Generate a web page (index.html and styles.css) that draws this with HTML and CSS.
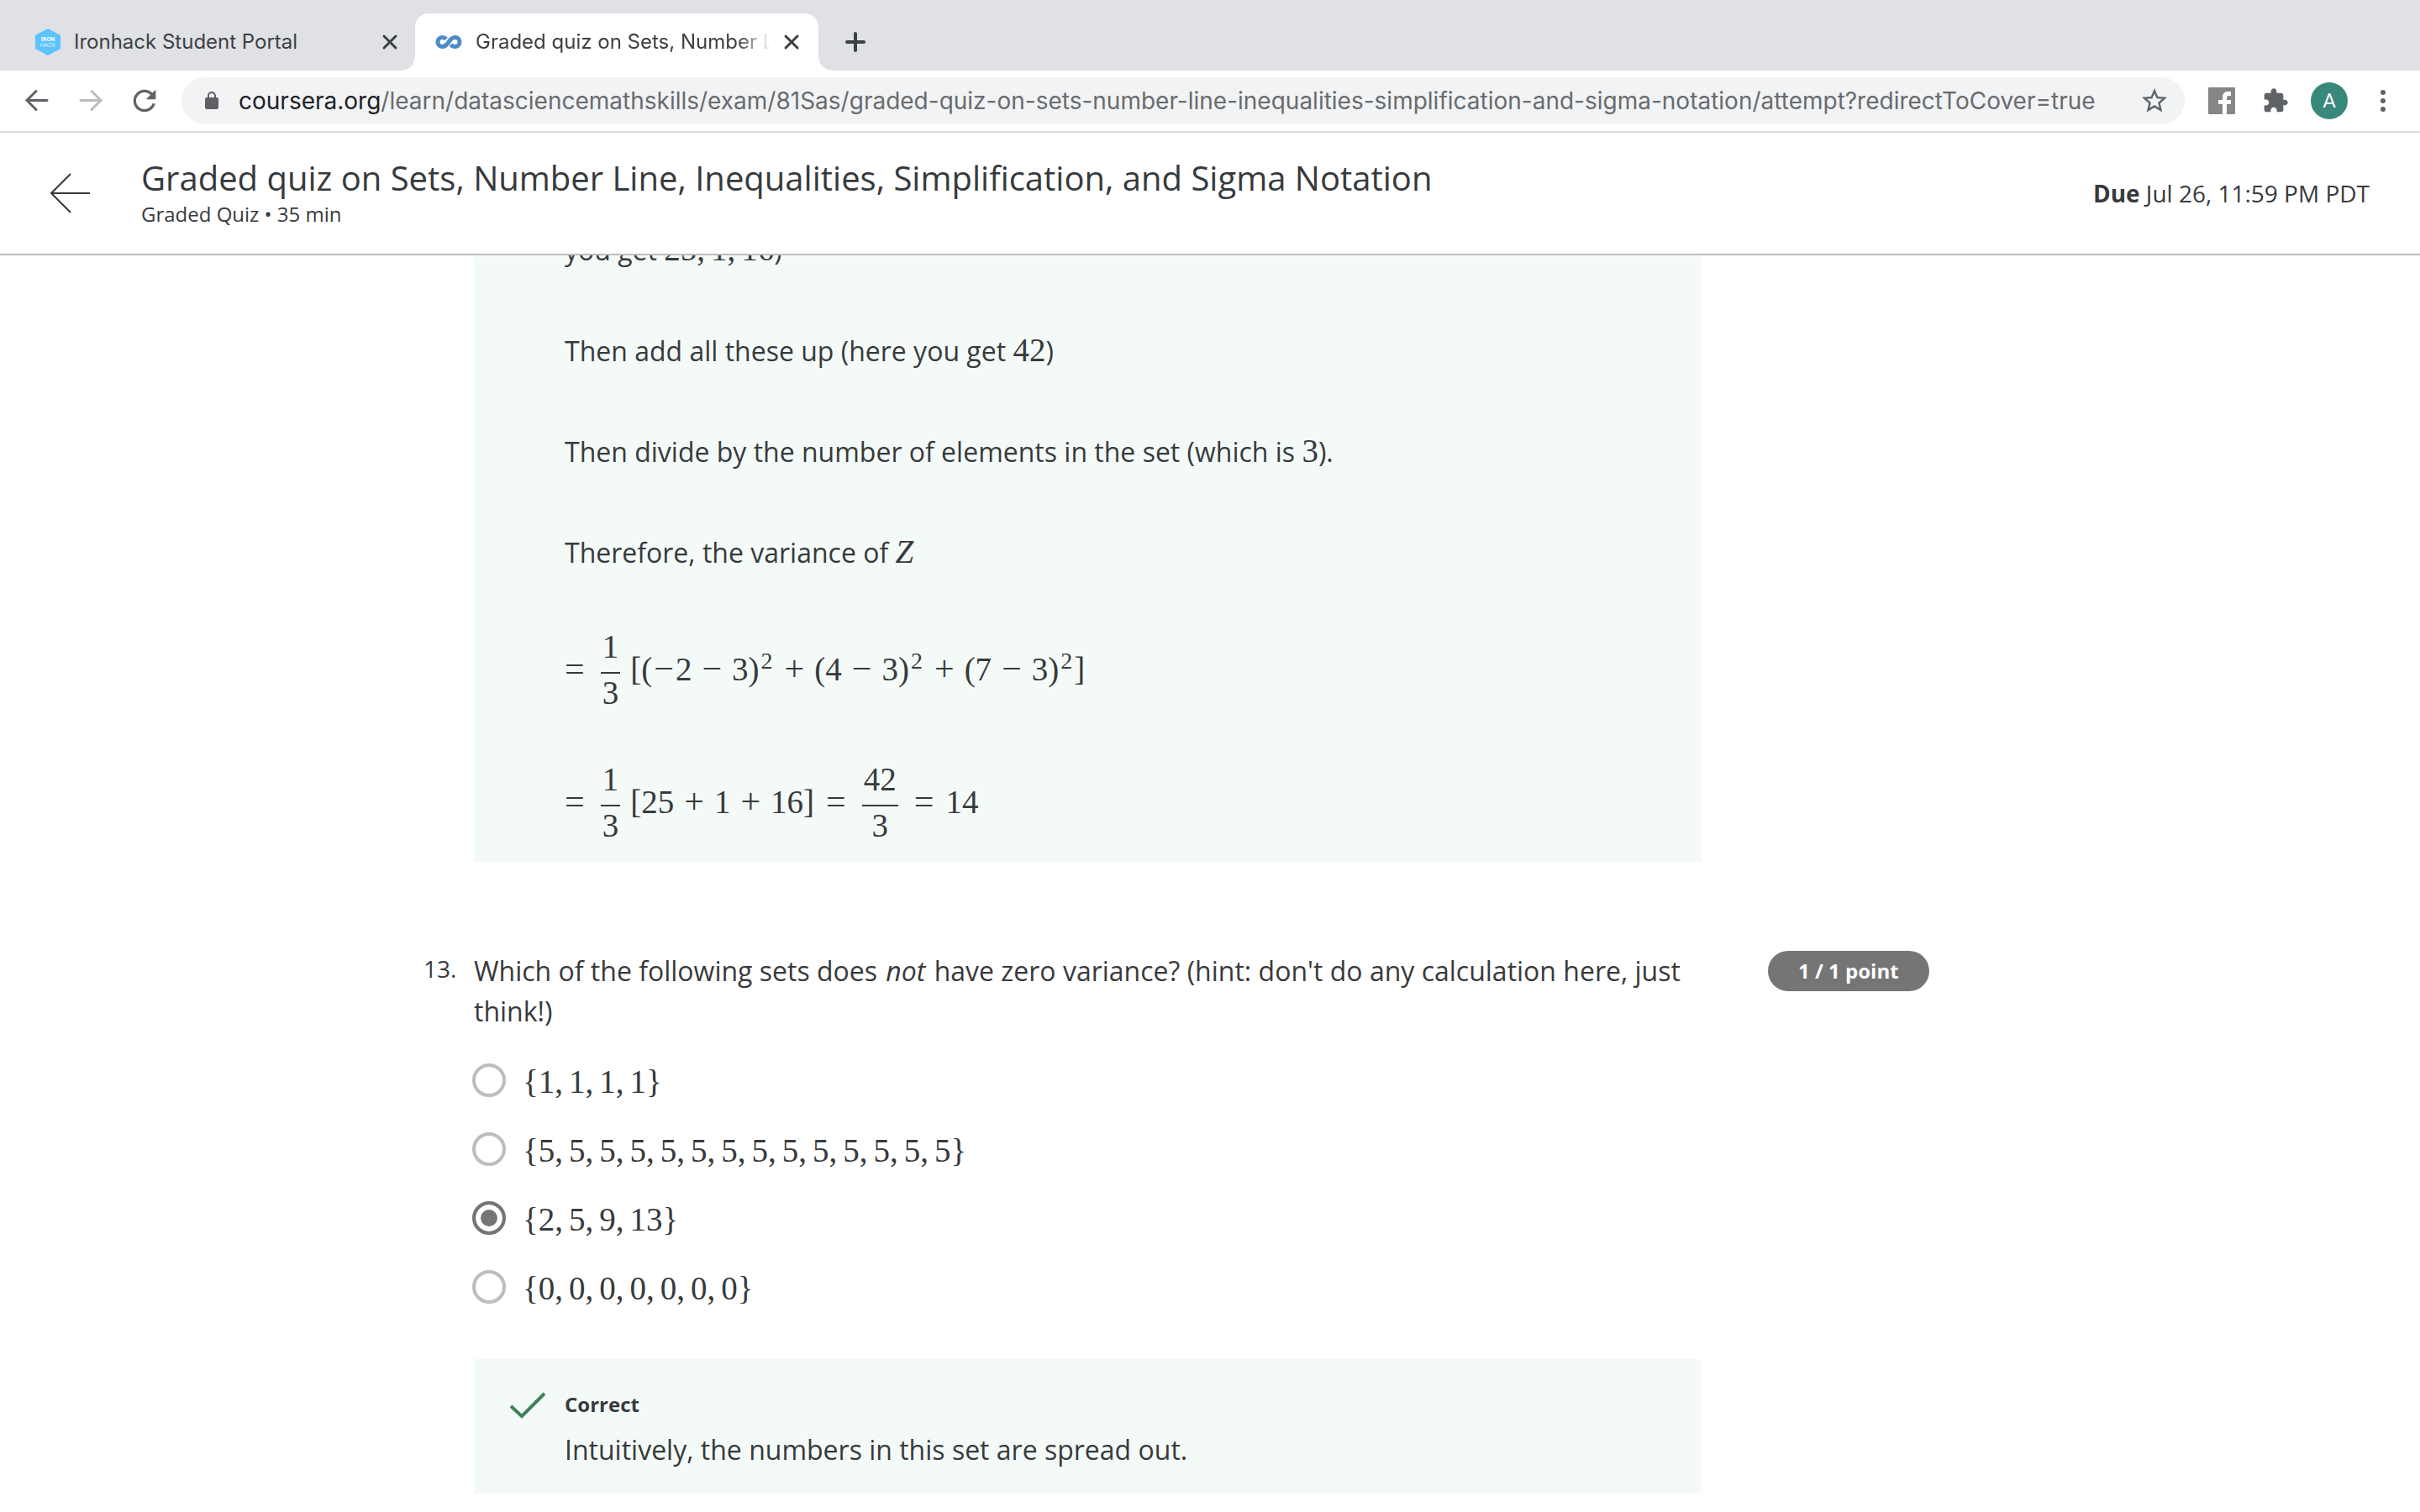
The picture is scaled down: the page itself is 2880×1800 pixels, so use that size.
FILE: index.html
```html
<!DOCTYPE html>
<html lang="en">
<head>
<meta charset="utf-8">
<meta name="viewport" content="width=device-width, initial-scale=1">
<title>Graded quiz on Sets, Number Line, Inequalities, Simplification, and Sigma Notation</title>
<link rel="stylesheet" href="styles.css">
</head>
<body>
<div class="tabs">
  <div class="tab">
    <svg class="hex" viewBox="0 0 30 32" width="30" height="32"><path fill="#5cc3fb" d="M15 0l15 8v16l-15 8L0 24V8z"/><text class="hex-bold" x="15" y="15">IRON</text><text class="hex-thin" x="15" y="22">HACK</text></svg>
    <span class="tab-title">Ironhack Student Portal</span>
    <button class="close" aria-label="Close tab"><svg viewBox="0 0 16 16" width="16" height="16"><path class="line" d="M1 1l14 14M15 1L1 15"/></svg></button>
  </div>
  <div class="tab active">
    <svg class="infinity" viewBox="0 0 32 16" width="32" height="16"><path fill="none" stroke="#4f8bc9" stroke-width="5" d="M13 4.6C11.800 3.200 10.200 2.500 8.500 2.500a5.500 5.500 0 0 0 0 11c3.500 0 5.500-2.500 7.500-5.500s4-5.500 7.500-5.500a5.500 5.500 0 0 1 0 11c-2 0-3.700-.8-5-2.400"/></svg>
    <span class="tab-title">Graded quiz on Sets, Number Line</span>
    <button class="close" aria-label="Close tab"><svg viewBox="0 0 16 16" width="16" height="16"><path class="line" d="M1 1l14 14M15 1L1 15"/></svg></button>
  </div>
  <button class="new-tab" aria-label="New tab"><svg viewBox="0 0 24 24" width="24" height="24"><path class="line thick" d="M12 2v20M2 12h20"/></svg></button>
</div>

<div class="toolbar">
  <nav class="nav">
    <button aria-label="Back"><svg viewBox="0 0 32 32" width="32" height="32"><path class="arrow" d="M28 15.500H5M15 4.500l-11 11 11 11"/></svg></button>
    <button aria-label="Forward"><svg viewBox="0 0 32 32" width="32" height="32"><path class="arrow dim" d="M4 15.500h23M17 4.500l11 11-11 11"/></svg></button>
    <button aria-label="Reload"><svg class="reload" viewBox="0 0 24 24" width="40" height="40"><path fill="#5f6368" d="M17.650 6.350C16.200 4.900 14.210 4 12 4c-4.420 0-7.990 3.580-7.990 8s3.570 8 7.990 8c3.730 0 6.840-2.550 7.730-6h-2.080c-.82 2.330-3.040 4-5.650 4-3.310 0-6-2.690-6-6s2.690-6 6-6c1.660 0 3.140.69 4.220 1.780L13 11h7V4l-2.350 2.350z"/></svg></button>
  </nav>
  <div class="omnibox">
    <svg viewBox="0 0 16 22" width="16" height="22"><path fill="#5f6064" d="M2 7h12a2 2 0 0 1 2 2v10a2 2 0 0 1-2 2H2a2 2 0 0 1-2-2V9a2 2 0 0 1 2-2z"/><path fill="none" stroke="#5f6064" stroke-width="2" d="M4 8V5a4 4 0 0 1 8 0v3"/></svg>
    <div class="url" role="textbox" aria-label="Address"><span class="host">coursera.org</span>/learn/datasciencemathskills/exam/81Sas/graded-quiz-on-sets-number-line-inequalities-simplification-and-sigma-notation/attempt?redirectToCover=true</div>
    <button aria-label="Bookmark this page"><svg viewBox="0 0 24 24" width="36" height="36"><path fill="#5f6368" d="M22 9.240l-7.190-.62L12 2 9.190 8.630 2 9.240l5.460 4.730L5.820 21 12 17.270 18.180 21l-1.630-7.030L22 9.240zM12 15.400l-3.760 2.270 1-4.280-3.320-2.880 4.380-.38L12 6.100l1.710 4.040 4.380.38-3.320 2.880 1 4.280L12 15.400z"/></svg></button>
  </div>
  <button class="ext" aria-label="Facebook extension"><svg viewBox="0 0 32 32" width="32" height="32"><rect width="32" height="32" rx="1" fill="#868686"/><path fill="#fff" d="M17 32V20h-5v-5h5v-3c0-4.500 2.500-7 6-7h4v5h-2.500c-1.700 0-2.500.9-2.500 2.500V15h5v5h-5v12z"/></svg></button>
  <button class="ext" aria-label="Extensions"><svg viewBox="0 0 24 24" width="32" height="32"><path fill="#5f6368" d="M20.500 11H19V7c0-1.100-.9-2-2-2h-4V3.500C13 2.120 11.880 1 10.500 1S8 2.120 8 3.500V5H4c-1.100 0-1.990.9-1.990 2v3.800H3.500c1.490 0 2.700 1.210 2.700 2.700s-1.210 2.700-2.700 2.700H2V20c0 1.100.9 2 2 2h3.800v-1.500c0-1.490 1.210-2.700 2.700-2.700 1.490 0 2.700 1.210 2.700 2.700V22H17c1.100 0 2-.9 2-2v-4h1.500c1.380 0 2.500-1.120 2.500-2.500S21.880 11 20.500 11z"/></svg></button>
  <button class="avatar" aria-label="Profile">A</button>
  <button class="menu" aria-label="Menu"><svg viewBox="0 0 8 28" width="8" height="28"><g fill="#5f6368"><circle cx="4" cy="4" r="3"/><circle cx="4" cy="14" r="3"/><circle cx="4" cy="24" r="3"/></g></svg></button>
</div>

<header class="header">
  <a class="back" href="#" aria-label="Back to course"><svg viewBox="0 0 48 48" width="48" height="48"><path fill="none" stroke="#373a3c" stroke-width="2" d="M47 24H2M24 1L1 24l23 23"/></svg></a>
  <div class="heading">
    <h1>Graded quiz on Sets, Number Line, Inequalities, Simplification, and Sigma Notation</h1>
    <p>Graded Quiz • 35 min</p>
  </div>
  <p class="due"><b>Due</b> Jul 26, 11:59 PM PDT</p>
</header>

<main class="page">
  <section class="question">
    <div class="body">
      <div class="feedback partial">
        <p>you get <span class="math">25<span class="comma">,</span>1<span class="comma">,</span>16</span>)</p>
        <p>Then add all these up (here you get <span class="math">42</span>)</p>
        <p>Then divide by the number of elements in the set (which is <span class="math">3</span>).</p>
        <p>Therefore, the variance of <i class="math">Z</i></p>
        <div class="equations">
          <div class="equation"><span class="rel">=</span><span class="frac"><span>1</span><span>3</span></span><span class="open">[</span>(<span class="sign">−</span>2<span class="op">−</span>3)<sup>2</sup><span class="op">+</span>(4<span class="op">−</span>3)<sup>2</sup><span class="op">+</span>(7<span class="op">−</span>3)<sup>2</sup>]</div>
          <div class="equation"><span class="rel">=</span><span class="frac"><span>1</span><span>3</span></span><span class="open">[</span>25<span class="op">+</span>1<span class="op">+</span>16]<span class="op equals">=</span><span class="frac"><span>42</span><span>3</span></span><span class="op equals">=</span>14</div>
        </div>
      </div>
    </div>
  </section>

  <section class="question">
    <div class="number">13.</div>
    <div class="body">
      <p class="prompt" id="q13">Which of the following sets does <em>not</em> have zero variance? (hint: don't do any calculation here, just think!)</p>
      <div class="options" role="radiogroup" aria-labelledby="q13">
        <label class="option"><input type="radio" name="q13" disabled><span class="math">{1<span class="comma">,</span>1<span class="comma">,</span>1<span class="comma">,</span>1}</span></label>
        <label class="option"><input type="radio" name="q13" disabled><span class="math">{5<span class="comma">,</span>5<span class="comma">,</span>5<span class="comma">,</span>5<span class="comma">,</span>5<span class="comma">,</span>5<span class="comma">,</span>5<span class="comma">,</span>5<span class="comma">,</span>5<span class="comma">,</span>5<span class="comma">,</span>5<span class="comma">,</span>5<span class="comma">,</span>5<span class="comma">,</span>5}</span></label>
        <label class="option"><input type="radio" name="q13" checked disabled><span class="math">{2<span class="comma">,</span>5<span class="comma">,</span>9<span class="comma">,</span>13}</span></label>
        <label class="option"><input type="radio" name="q13" disabled><span class="math">{0<span class="comma">,</span>0<span class="comma">,</span>0<span class="comma">,</span>0<span class="comma">,</span>0<span class="comma">,</span>0<span class="comma">,</span>0}</span></label>
      </div>
      <div class="feedback result">
        <svg class="check" viewBox="0 0 42 32" width="42" height="32"><path fill="none" stroke="#3c8157" stroke-width="4" d="M1 17l13 12L41 2"/></svg>
        <div>
          <h2>Correct</h2>
          <p>Intuitively, the numbers in this set are spread out.</p>
        </div>
      </div>
    </div>
    <div class="score"><span class="pill">1 / 1 point</span></div>
  </section>
</main>
</body>
</html>
```
FILE: styles.css
```css
* { box-sizing: border-box; }

body {
  margin: 0;
  height: 100vh;
  display: flex;
  flex-direction: column;
  background: #fff;
  color: #373a3c;
  font: 32px/48px "Open Sans", sans-serif;
}

h1, h2, p { margin: 0; font-weight: 400; }
svg { display: block; flex: none; }

button {
  display: flex;
  align-items: center;
  justify-content: center;
  flex: none;
  padding: 0;
  border: 0;
  background: none;
}

/* Browser tab strip */
.tabs {
  display: flex;
  align-items: stretch;
  padding-top: 16px;
  height: 84px;
  background: #dfe1e5;
  color: #3c4043;
  font: 24px/32px "Inter", sans-serif;
}

.tab {
  display: flex;
  align-items: center;
  gap: 16px;
  width: 480px;
  padding: 0 24px;
  position: relative;
}

.tab:first-child { width: 494px; padding-left: 42px; padding-right: 22px; }
.active { background: #fff; border-radius: 16px 16px 0 0; }

.active::before,
.active::after {
  content: "";
  position: absolute;
  bottom: 0;
  width: 16px;
  height: 16px;
}

.active::before { left: -16px; background: radial-gradient(circle at 0 0, transparent 15px, #fff 16px); }
.active::after { right: -16px; background: radial-gradient(circle at 100% 0, transparent 15px, #fff 16px); }

.tab-title { flex: 1; min-width: 0; overflow: hidden; white-space: nowrap; }
.active .tab-title {
  -webkit-mask-image: linear-gradient(to left, transparent, #000 40px);
  mask-image: linear-gradient(to left, transparent, #000 40px);
}

.close svg { overflow: visible; }
.line { fill: none; stroke: #3c4043; stroke-width: 3; stroke-linecap: round; }
.thick { stroke-width: 4; }
.new-tab { margin-left: 32px; }

.hex text { fill: #fff; text-anchor: middle; font-family: "Roboto", sans-serif; font-size: 7px; }
.hex-bold { font-weight: 700; }
.hex-thin { font-weight: 300; }

/* Browser toolbar */
.toolbar {
  display: flex;
  align-items: center;
  height: 74px;
  padding: 0 40px 0 28px;
  border-bottom: 2px solid #dadce0;
}

.nav { display: flex; gap: 32px; }
.nav button { width: 32px; height: 32px; }
.arrow { fill: none; stroke: #5f6368; stroke-width: 3; stroke-linecap: round; }
.dim { stroke: #babcbe; }

.omnibox {
  flex: 1;
  min-width: 0;
  display: flex;
  align-items: center;
  gap: 24px;
  height: 56px;
  margin: 0 28px;
  padding: 0 18px 0 28px;
  border-radius: 28px;
  background: #f1f3f4;
}

.url {
  flex: 1;
  min-width: 0;
  overflow: hidden;
  white-space: nowrap;
  color: #696b6e;
  font: 28px/40px "Inter", sans-serif;
}
.host { color: #202124; }

.ext { margin-right: 32px; }
.ext + .ext { margin-right: 26px; }
.avatar {
  width: 44px;
  height: 44px;
  border-radius: 50%;
  background: #38897b;
  color: #fff;
  font: 24px/44px "Roboto", sans-serif;
}
.menu { margin-left: 38px; }

/* Quiz header */
.header {
  flex: none;
  display: flex;
  align-items: center;
  padding: 28px 60px;
  border-bottom: 2px solid #bdbdbd;
}
.heading { flex: 1; margin-left: 60px; padding-top: 2px; }
h1 { font-size: 40px; line-height: 48px; }
.heading p { font-size: 24px; line-height: 38px; }
.due { font-size: 28px; line-height: 40px; }

/* Scrolled quiz content */
.page {
  flex: 1;
  min-height: 0;
  overflow: hidden;
  padding: 0 17.5%;
}

.question {
  display: grid;
  grid-template-columns: 60px minmax(0, 1fr) 272px;
  margin-bottom: 106px;
}
.body { grid-column: 2; margin-right: 80px; }
.number { font-size: 28px; line-height: 42px; }
.score { display: flex; align-items: flex-start; }

.pill {
  padding: 0 36px;
  border-radius: 24px;
  background: #757575;
  color: #fff;
  font-size: 24px;
  font-weight: 700;
}

.feedback { background: #f4faf8; }
.partial {
  display: flex;
  flex-direction: column;
  gap: 72px;
  margin-top: -30px;
  padding: 0 108px 18px;
}

/* Mathematical notation */
.math,
.equation { font-family: "Liberation Serif", serif; font-size: 39px; }
.math { line-height: 1; }
.comma { margin-right: 7px; }
.equations { display: flex; flex-direction: column; gap: 60px; margin-top: -2px; }
.equation { line-height: 48px; white-space: nowrap; }
.op, .rel, .sign { font-size: 42px; line-height: 1; }
.op { margin: 0 12px; }
.equals { margin: 0 14px; }
.rel { margin-right: 14px; }
.sign { margin: 0 2px; }
.open { margin-left: 7px; }
.equation sup { margin: 0 2px; font-size: 28px; line-height: 1; vertical-align: 14px; }

.frac {
  display: inline-flex;
  flex-direction: column;
  vertical-align: middle;
  margin: 0 5px;
  text-align: center;
  line-height: 36px;
}
.frac span { padding: 0 2px; }
.frac span:first-child { padding-bottom: 12px; border-bottom: 2px solid #373a3c; }
.frac span:last-child { padding-top: 5px; padding-bottom: 7px; }

/* Answer options */
.prompt em { margin: 0 2px; }
.options { display: flex; flex-direction: column; gap: 34px; margin: 34px 0 62px; }
.option { display: flex; align-items: center; gap: 20px; height: 48px; margin-left: -2px; }
.option .math { padding-top: 3px; line-height: 48px; }

.option input {
  appearance: none;
  flex: none;
  width: 40px;
  height: 40px;
  margin: 0;
  border: 4px solid #bdbdbd;
  border-radius: 50%;
}
.option input:checked {
  border-color: #757575;
  background: #757575;
  box-shadow: inset 0 0 0 6px #fff;
}

.result { display: flex; gap: 23px; padding: 36px 43px 28px; }
.check { margin-top: 3px; }
h2 { margin-bottom: 12px; font-size: 24px; line-height: 36px; font-weight: 700; }
```
